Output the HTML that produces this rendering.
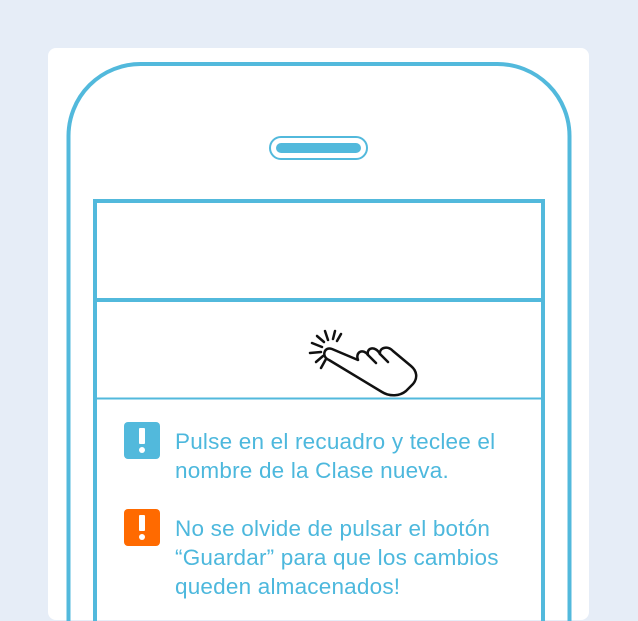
<!DOCTYPE html>
<html><head><style>
body{margin:0;width:638px;height:621px;background:#e6edf7;position:relative;overflow:hidden;font-family:"Liberation Sans",sans-serif}
.card{position:absolute;left:48px;top:48px;width:541px;height:572px;background:#fff;border-radius:8px}
.t{position:absolute;left:175px;color:#4db8dd;font-size:22.5px;letter-spacing:0.2px;line-height:29px;font-weight:300;white-space:nowrap}
.ic{position:absolute;left:124px;width:36px;height:37px;border-radius:4px}
.ic:before{content:"";position:absolute;left:15px;top:6px;width:6px;height:16px;background:#fff;border-radius:1px}
.ic:after{content:"";position:absolute;left:15px;top:25px;width:6px;height:6px;background:#fff;border-radius:50%}
</style></head><body>
<div class="card"></div>
<svg width="638" height="621" style="position:absolute;left:0;top:0">
<path d="M68.5 621 V136 A72 72 0 0 1 140.5 64 H497.5 A72 72 0 0 1 569.5 136 V621" fill="none" stroke="#52b9dc" stroke-width="4"/>
<path d="M95 621 V201 H543 V621" fill="none" stroke="#52b9dc" stroke-width="4"/>
<line x1="95" y1="300" x2="543" y2="300" stroke="#52b9dc" stroke-width="4"/>
<line x1="95" y1="398.5" x2="543" y2="398.5" stroke="#52b9dc" stroke-width="2"/>
<rect x="270" y="137" width="97" height="22" rx="11" fill="#fff" stroke="#52b9dc" stroke-width="2"/>
<rect x="276" y="143" width="85" height="10" rx="5" fill="#52b9dc"/>
<g fill="none" stroke="#111" stroke-width="2.5" stroke-linecap="round" stroke-linejoin="round">
<path d="M358 360 L332 349 C324 346 321 357 329 360 L382 392 C390 397 400 396 406 391 L413 384 C418 378 417 371 411 366 L393 351 C387 345 379 348 380 354 C375 345 366 348 368 355 C363 348 355 352 358 360 Z"/>
<path d="M380 354 L388 362 M368 355 L376 363"/>
<path d="M322 347 L312 343 M324 342 L317 336 M328 340 L325 331 M333 339 L335 331 M337 341 L341 334 M321 352 L310 353 M323 356 L316 362 M326 359 L321 368"/>
</g>
</svg>
<div class="ic" style="top:422px;background:#52b9dc"></div>
<div class="ic" style="top:509px;background:#ff6a00"></div>
<div class="t" style="top:427px">Pulse en el recuadro y teclee el<br>nombre de la Clase nueva.</div>
<div class="t" style="top:514px">No se olvide de pulsar el botón<br>“Guardar” para que los cambios<br>queden almacenados!</div>
</body></html>
